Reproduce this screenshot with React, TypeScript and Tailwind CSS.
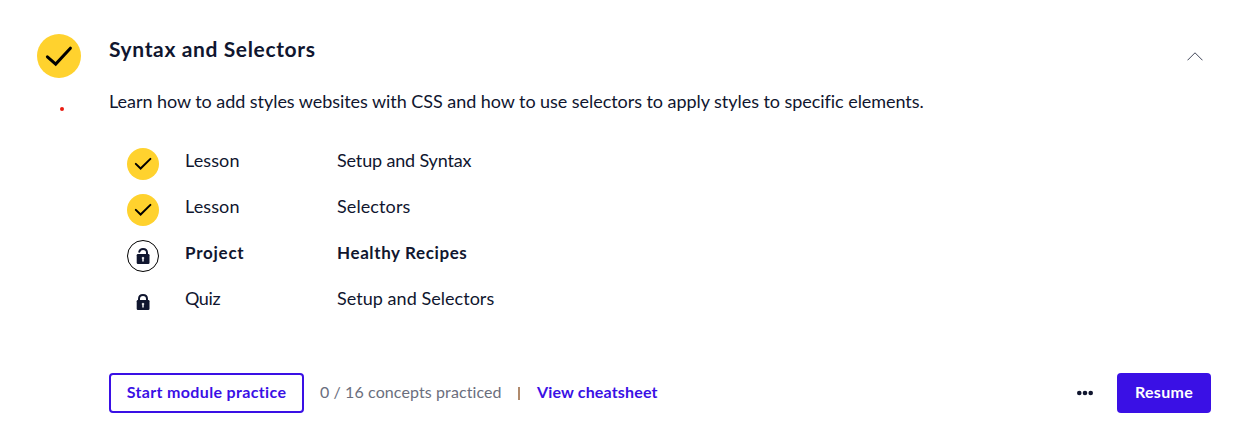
import type { ReactNode } from "react";

function Check({ large = false }: { large?: boolean }) {
  return large ? (
    <svg className="size-11 shrink-0" viewBox="0 0 44 44" fill="none">
      <circle cx="22" cy="22" r="22" fill="#ffd22e" />
      <path d="M10.4 22.8 18.7 30.1 33.4 14.2" stroke="#000" strokeWidth="3" strokeLinecap="round" />
    </svg>
  ) : (
    <svg className="size-8 shrink-0" viewBox="0 0 32 32" fill="none">
      <circle cx="16" cy="16" r="16" fill="#ffd22e" />
      <path d="M8.8 15.9 13.6 20.5 23.4 10.9" stroke="#000" strokeWidth="2" strokeLinecap="round" />
    </svg>
  );
}

function Lock({ open = false }: { open?: boolean }) {
  return (
    <svg className="size-8 shrink-0" viewBox="0 0 32 32" fill="none">
      {open && <circle cx="16" cy="16" r="15.5" stroke="#000" />}
      <path
        d={open ? "M12.3 11.8C12.7 10 14 9 16 9c2.4 0 4 1.6 4 3.8V16" : "M12 15v-2c0-2.4 1.7-4 4-4s4 1.6 4 4v2"}
        stroke="#10162f"
        strokeWidth="2"
        strokeLinecap="round"
      />
      <rect x="9.7" y="14" width="12.8" height="10" rx="1.2" fill="#10162f" />
      <path d="M16 17.4v3.6M15.4 18h1.2" stroke="#fff" strokeWidth="1.4" strokeLinecap="round" />
    </svg>
  );
}

interface Row {
  icon: ReactNode;
  kind: string;
  kindClass: string;
  name: string;
  nameClass: string;
}

const rows: Row[] = [
  { icon: <Check />, kind: "Lesson", kindClass: "tracking-[0.1px]", name: "Setup and Syntax", nameClass: "tracking-[-0.16px]" },
  { icon: <Check />, kind: "Lesson", kindClass: "tracking-[0.1px]", name: "Selectors", nameClass: "tracking-[0.1px]" },
  { icon: <Lock open />, kind: "Project", kindClass: "pt-px text-[17px] font-bold tracking-[0.75px]", name: "Healthy Recipes", nameClass: "pt-px text-[17px] font-bold tracking-[0.61px]" },
  { icon: <Lock />, kind: "Quiz", kindClass: "tracking-[-0.4px]", name: "Setup and Selectors", nameClass: "tracking-[0.04px]" },
];

export default function App() {
  return (
    <section className="flex h-[436px] w-[1234px] gap-7 bg-white pt-[34px] pr-[23px] pl-[37px] font-['Lato',sans-serif] text-lg leading-6 text-[#10162f]">
      <div className="flex w-11 flex-col">
        <Check large />
        <span className="mt-[29px] ml-[23px] size-1 rounded-full bg-[#e91c11]" />
      </div>
      <div className="flex-1">
        <header className="flex h-[55px] justify-between">
          <h2 className="pt-px text-[21px] leading-7 font-bold tracking-[0.63px]">Syntax and Selectors</h2>
          <button aria-label="Collapse" className="mt-[17px] mr-2 h-3 w-4">
            <svg className="h-3 w-4" viewBox="0 0 16 12" fill="none">
              <path d="M.5 9.3 8 1.8l7.5 7.5" stroke="#10162f" strokeWidth=".8" />
            </svg>
          </button>
        </header>
        <p className="tracking-[-0.05px]">
          Learn how to add styles websites with CSS and how to use selectors to apply styles to specific elements.
        </p>
        <ul className="mt-[35px] ml-[18px] flex flex-col gap-3.5">
          {rows.map((row, i) => (
            <li key={i} className="flex h-8">
              {row.icon}
              <span className={`ml-[26px] w-[152px] ${row.kindClass}`}>{row.kind}</span>
              <span className={row.nameClass}>{row.name}</span>
            </li>
          ))}
        </ul>
        <footer className="mt-[55px] flex h-10 items-center text-base">
          <button className="h-10 w-[195px] rounded-[4px] border-2 border-[#3a10e5] pb-0.5 font-bold tracking-[0.35px] text-[#3a10e5]">
            Start module practice
          </button>
          <span className="ml-4 w-[182px] pb-0.5 whitespace-nowrap tracking-[0.1px] text-[#6a6e7d]">0 / 16 concepts practiced</span>
          <span className="ml-4 h-[13px] w-[1.5px] bg-[#b08a6c]" />
          <a className="ml-[17.5px] pb-0.5 font-bold tracking-[0.16px] text-[#3a10e5]">View cheatsheet</a>
          <button aria-label="More" className="mr-6 ml-auto">
            <svg className="h-1.5 w-4" viewBox="0 0 16 6" fill="#10162f">
              <circle cx="2.3" cy="3" r="2.3" />
              <circle cx="8" cy="3" r="2.3" />
              <circle cx="13.7" cy="3" r="2.3" />
            </svg>
          </button>
          <button className="h-10 w-[94px] rounded-[4px] bg-[#3a10e5] pb-0.5 font-bold tracking-[0.28px] text-white">Resume</button>
        </footer>
      </div>
    </section>
  );
}
